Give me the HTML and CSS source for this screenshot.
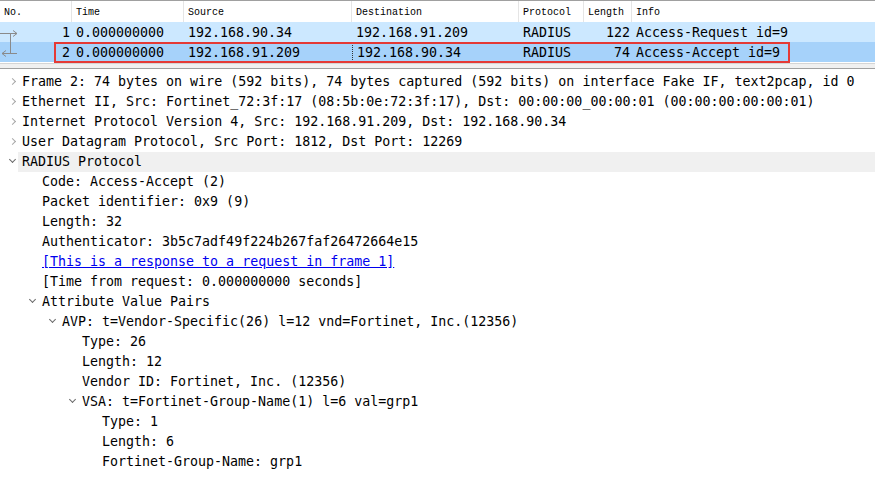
FILE: index.html
```html
<!DOCTYPE html>
<html>
<head>
<meta charset="utf-8">
<link rel="stylesheet" href="styles.css">
</head>
<body>
<div class="list">
  <div class="row hdr">
    <div class="c">No.</div>
    <div class="c">Time</div>
    <div class="c">Source</div>
    <div class="c">Destination</div>
    <div class="c">Protocol</div>
    <div class="c">Length</div>
    <div class="c last">Info</div>
  </div>
  <div class="row pkt p1">
    <div class="c r">1</div>
    <div class="c">0.000000000</div>
    <div class="c">192.168.90.34</div>
    <div class="c">192.168.91.209</div>
    <div class="c">RADIUS</div>
    <div class="c r">122</div>
    <div class="c">Access-Request id=9</div>
  </div>
  <div class="row pkt p2">
    <div class="c r">2</div>
    <div class="c">0.000000000</div>
    <div class="c">192.168.91.209</div>
    <div class="c focus">192.168.90.34</div>
    <div class="c">RADIUS</div>
    <div class="c r">74</div>
    <div class="c">Access-Accept id=9</div>
  </div>
  <svg class="rel" width="20" height="40" viewBox="0 0 20 40">
    <path d="M0 10.5H17M13 7.5L17 10.5L13 13.5M10.5 10.5V30.5M2 30.5H17M6 27.5L2 30.5L6 33.5" fill="none" stroke="#8a8a8a" stroke-width="1"/>
  </svg>
  <div class="redbox"></div>
</div>
<div class="split"></div>
<div class="tree">
  <div class="n l0"><span class="ch col"></span>Frame 2: 74 bytes on wire (592 bits), 74 bytes captured (592 bits) on interface Fake IF, text2pcap, id 0</div>
  <div class="n l0"><span class="ch col"></span>Ethernet II, Src: Fortinet_72:3f:17 (08:5b:0e:72:3f:17), Dst: 00:00:00_00:00:01 (00:00:00:00:00:01)</div>
  <div class="n l0"><span class="ch col"></span>Internet Protocol Version 4, Src: 192.168.91.209, Dst: 192.168.90.34</div>
  <div class="n l0"><span class="ch col"></span>User Datagram Protocol, Src Port: 1812, Dst Port: 12269</div>
  <div class="n l0 sel"><span class="ch exp"></span>RADIUS Protocol</div>
  <div class="n l1">Code: Access-Accept (2)</div>
  <div class="n l1">Packet identifier: 0x9 (9)</div>
  <div class="n l1">Length: 32</div>
  <div class="n l1">Authenticator: 3b5c7adf49f224b267faf26472664e15</div>
  <div class="n l1"><span class="link">[This is a response to a request in frame 1]</span></div>
  <div class="n l1">[Time from request: 0.000000000 seconds]</div>
  <div class="n l1"><span class="ch exp"></span>Attribute Value Pairs</div>
  <div class="n l2"><span class="ch exp"></span>AVP: t=Vendor-Specific(26) l=12 vnd=Fortinet, Inc.(12356)</div>
  <div class="n l3">Type: 26</div>
  <div class="n l3">Length: 12</div>
  <div class="n l3">Vendor ID: Fortinet, Inc. (12356)</div>
  <div class="n l3"><span class="ch exp"></span>VSA: t=Fortinet-Group-Name(1) l=6 val=grp1</div>
  <div class="n l4">Type: 1</div>
  <div class="n l4">Length: 6</div>
  <div class="n l4">Fortinet-Group-Name: grp1</div>
</div>
</body>
</html>
```
FILE: styles.css
```css
html, body {
  margin: 0;
  padding: 0;
  background: #ffffff;
  width: 875px;
  height: 479px;
  overflow: hidden;
}
body {
  font-family: "DejaVu Sans Mono", "Liberation Mono", monospace;
  font-size: 13.3px;
  color: #000;
}
.list {
  position: relative;
  border-top: 1px solid #a0a0a0;
  padding-bottom: 1px;
}
.row {
  display: grid;
  grid-template-columns: 72px 112px 168px 167px 65px 48px 1fr;
  height: 20px;
}
.c {
  line-height: 20px;
  white-space: nowrap;
  overflow: hidden;
  padding-left: 4px;
}
.hdr {
  height: 21px;
}
.hdr .c {
  font-family: "Liberation Mono", monospace;
  font-size: 10px;
  color: #000;
  border-right: 1px solid #e5e5e5;
  padding-left: 4px;
  line-height: 24px;
}
.hdr .c.last { border-right: none; }
.pkt .c { padding-left: 4px; line-height: 21px; }
.pkt .c.r { text-align: right; padding-left: 0; padding-right: 2px; }
.p1 { background: #cce8ff; }
.p2 { background: #a6d2fa; }
.focus {
  border-left: 1px dotted #333;
}
.rel {
  position: absolute;
  left: 0;
  top: 22px;
}
.redbox {
  position: absolute;
  left: 54px;
  top: 41px;
  width: 732px;
  height: 17px;
  border: 2px solid #e53935;
}
.split {
  border-top: 1px solid #d5d5d5;
  height: 4px;
  background: #f0f0f0;
  border-bottom: 1px solid #a0a0a0;
}
.tree {
  padding-top: 3px;
}
.n {
  position: relative;
  height: 20px;
  line-height: 20px;
  white-space: nowrap;
}
.l0 { padding-left: 22px; }
.l1 { padding-left: 42px; }
.l2 { padding-left: 62px; }
.l3 { padding-left: 82px; }
.l4 { padding-left: 102px; }
.sel {
  background: #f0f0f0;
  margin-left: 18px;
  padding-left: 4px;
}
.ch {
  position: absolute;
  top: 0;
  width: 12px;
  height: 20px;
  margin-left: -16px;
}
.ch.col::before {
  content: "";
  position: absolute;
  left: 4px;
  top: 7px;
  width: 4px;
  height: 4px;
  border-right: 1px solid #a8a8a8;
  border-bottom: 1px solid #a8a8a8;
  transform: rotate(-45deg);
}
.ch.exp::before {
  content: "";
  position: absolute;
  left: 4px;
  top: 5px;
  width: 4px;
  height: 4px;
  border-right: 1px solid #6a6a6a;
  border-bottom: 1px solid #6a6a6a;
  transform: rotate(45deg);
}
.link {
  color: #0000ee;
  text-decoration: underline;
}
```
